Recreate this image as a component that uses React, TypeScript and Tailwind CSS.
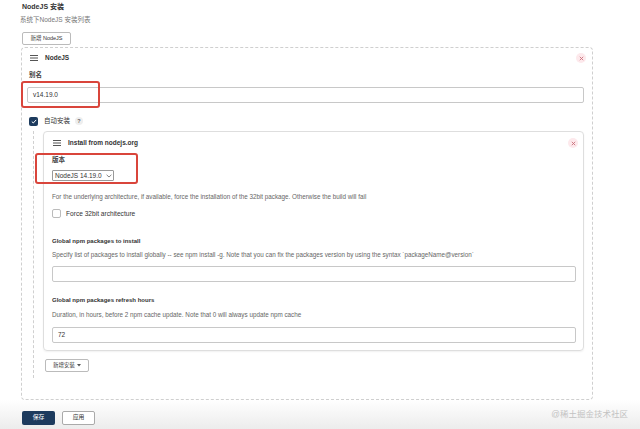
import React from "react";

function Burger() {
  return (
    <svg width="8" height="6" viewBox="0 0 8 6" className="shrink-0">
      <rect x="0" y="0" width="8" height="1" fill="#555" />
      <rect x="0" y="2.5" width="8" height="1" fill="#555" />
      <rect x="0" y="5" width="8" height="1" fill="#555" />
    </svg>
  );
}

function CloseBtn() {
  return (
    <div className="w-[10px] h-[10px] rounded-full bg-[#fde9ec] flex items-center justify-center">
      <svg width="5" height="5" viewBox="0 0 5 5">
        <path d="M0.8 0.8 L4.2 4.2 M4.2 0.8 L0.8 4.2" stroke="#c9707c" strokeWidth="0.9" />
      </svg>
    </div>
  );
}

export default function App() {
  return (
    <div className="relative w-[640px] h-[429px] overflow-hidden bg-white text-[#333] font-['Liberation_Sans','Noto_Sans_CJK_SC',sans-serif]">
      <div className="pl-[21px] pt-0">
        <div className="h-[14px] flex items-center ml-[1px] text-[7px] font-bold text-[#333]">NodeJS 安装</div>
        <div className="h-[12px] flex items-center ml-[-1px] text-[6.5px] text-[#777]">系统下NodeJS 安装列表</div>
        <button className="mt-[6px] ml-[1px] h-[13px] w-[49px] flex items-center justify-center border border-[#bbb] rounded-[2px] bg-white text-[5.5px] text-[#333]">
          新增 NodeJS
        </button>
        <div className="mt-[2px] w-[572px] h-[353px] border border-dashed border-[#cfcfcf] rounded-[4px] flex flex-col">
          <div className="h-[20px] flex items-center pl-[8px] pr-[6px]">
            <Burger />
            <span className="ml-[7px] text-[6.5px] font-bold text-[#333]">NodeJS</span>
            <div className="flex-1" />
            <CloseBtn />
          </div>
          <div className="h-[14px] flex items-center pl-[7px] text-[6.5px] font-semibold text-[#444]">别名</div>
          <div className="mt-[5px] ml-[5px] mr-[8px] h-[16px] border border-[#c8c8c8] rounded-[2px] flex items-center pl-[5px] text-[6.5px] text-[#333]">
            v14.19.0
          </div>
          <div className="mt-[8px] h-[20px] flex items-center pl-[7px]">
            <div className="w-[9px] h-[9px] rounded-[2px] bg-[#1d3b5e] flex items-center justify-center">
              <svg width="6" height="5" viewBox="0 0 6 5">
                <path d="M0.8 2.6 L2.3 4 L5.2 0.9" stroke="#fff" strokeWidth="1" fill="none" />
              </svg>
            </div>
            <span className="ml-[6px] text-[6.5px] text-[#333]">自动安装</span>
            <div className="ml-[5px] w-[8px] h-[8px] rounded-full bg-[#eee] flex items-center justify-center text-[5.5px] font-bold text-[#666]">?</div>
          </div>
          <div className="ml-[11px] border-l border-dashed border-[#d0d0d0] pl-[9px] pb-[6px] flex flex-col">
            <div className="w-[541px] h-[220px] border border-[#dedede] rounded-[4px] shadow-[0_1px_2px_rgba(0,0,0,0.06)] flex flex-col">
              <div className="h-[22px] flex items-center pl-[9px] pr-[5px]">
                <Burger />
                <span className="ml-[7px] text-[6.5px] font-bold text-[#333]">Install from nodejs.org</span>
                <div className="flex-1" />
                <CloseBtn />
              </div>
              <div className="h-[12px] flex items-center pl-[8px] text-[6.5px] font-semibold text-[#444]">版本</div>
              <div className="mt-[4px] ml-[8px] w-[62px] h-[11px] border border-[#999] rounded-[1px] flex items-center pl-[2px] text-[6.5px] text-[#333]">
                <span>NodeJS 14.19.0</span>
                <svg width="6" height="4" viewBox="0 0 6 4" className="ml-[4px]">
                  <path d="M0.6 0.8 L3 3 L5.4 0.8" stroke="#666" strokeWidth="0.8" fill="none" />
                </svg>
              </div>
              <div className="mt-[10px] h-[12px] flex items-center pl-[8px] text-[6.3px] text-[#666] whitespace-nowrap">
                For the underlying architecture, if available, force the installation of the 32bit package. Otherwise the build will fail
              </div>
              <div className="mt-[5px] h-[11px] flex items-center pl-[8px]">
                <div className="w-[9px] h-[9px] rounded-[2px] border border-[#bbb] bg-white" />
                <span className="ml-[5px] text-[6.6px] text-[#333]">Force 32bit architecture</span>
              </div>
              <div className="mt-[16px] h-[12px] flex items-center pl-[8px] text-[6px] font-bold text-[#333]">Global npm packages to install</div>
              <div className="mt-[2px] h-[12px] flex items-center pl-[8px] text-[6.3px] text-[#666] whitespace-nowrap">
                Specify list of packages to install globally -- see npm install -g. Note that you can fix the packages version by using the syntax `packageName@version`
              </div>
              <div className="mt-[5px] ml-[8px] mr-[7px] h-[16px] border border-[#c8c8c8] rounded-[2px]" />
              <div className="mt-[12px] h-[12px] flex items-center pl-[8px] text-[6px] font-bold text-[#333]">Global npm packages refresh hours</div>
              <div className="mt-[3px] h-[12px] flex items-center pl-[8px] text-[6.3px] text-[#666] whitespace-nowrap">
                Duration, in hours, before 2 npm cache update. Note that 0 will always update npm cache
              </div>
              <div className="mt-[6px] ml-[8px] mr-[7px] h-[16px] border border-[#c8c8c8] rounded-[2px] flex items-center pl-[5px] text-[6.5px] text-[#333]">
                72
              </div>
            </div>
            <button className="mt-[8px] ml-[2px] h-[13px] w-[44px] flex items-center justify-center border border-[#bbb] rounded-[2px] bg-white text-[5.5px] text-[#333]">
              新增安装
              <svg width="4" height="3" viewBox="0 0 4 3" className="ml-[2px]">
                <path d="M0 0 L4 0 L2 2.5 Z" fill="#555" />
              </svg>
            </button>
          </div>
        </div>
      </div>
      <div className="absolute left-0 right-0 bottom-0 h-[29px] bg-gradient-to-b from-white to-[#ececec] flex items-center pl-[22px] pt-[6px]">
        <button className="h-[14px] w-[33px] rounded-[2px] bg-[#1d3b5e] text-white text-[5.8px] flex items-center justify-center">保存</button>
        <button className="ml-[7px] h-[14px] w-[33px] rounded-[2px] border border-[#aaa] bg-white text-[#333] text-[5.8px] flex items-center justify-center">应用</button>
        <div className="flex-1" />
        <span className="mr-[12px] mb-[6px] text-[8.5px] text-[#c2c2c2]">@稀土掘金技术社区</span>
      </div>
      <div className="absolute left-[21px] top-[81px] w-[79px] h-[27px] border-2 border-[#d9453b] rounded-[3px] pointer-events-none" />
      <div className="absolute left-[35px] top-[153px] w-[103px] h-[31px] border-2 border-[#d9453b] rounded-[3px] pointer-events-none" />
    </div>
  );
}
